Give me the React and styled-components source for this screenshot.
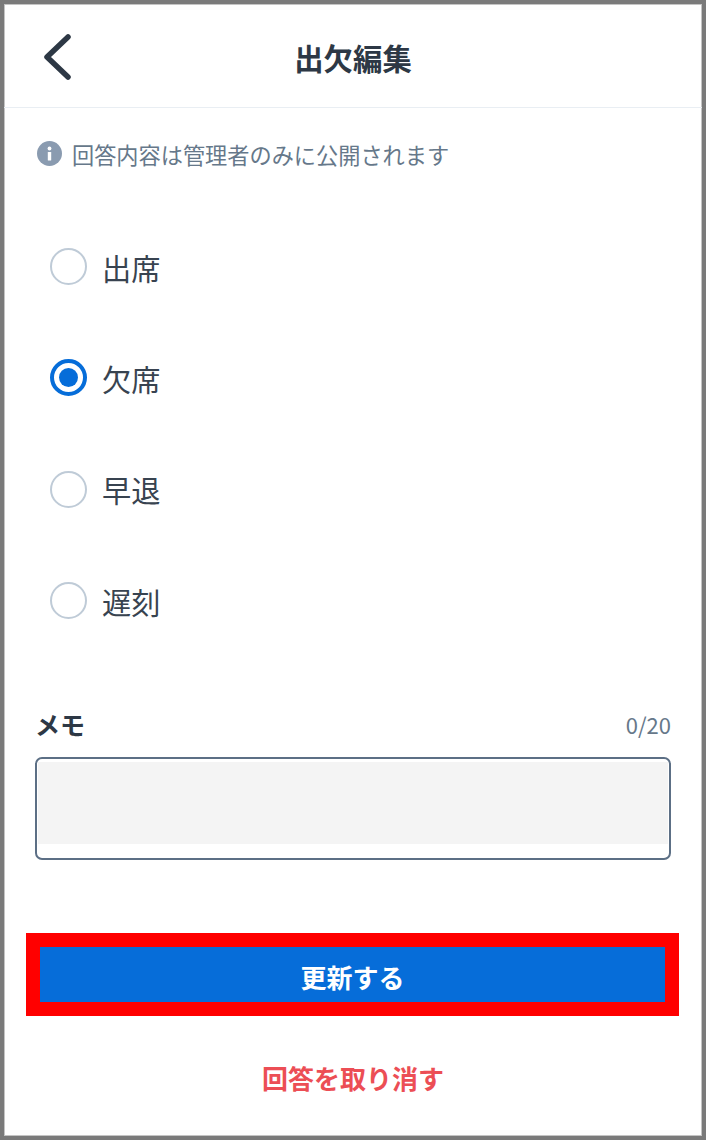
import styled, { createGlobalStyle } from "styled-components";

const GlobalStyle = createGlobalStyle`
  html, body {
    margin: 0;
    padding: 0;
    background: #fff;
  }
  * {
    box-sizing: border-box;
  }
  body {
    font-family: "Noto Sans CJK JP", "Noto Sans", sans-serif;
  }
`;

const Frame = styled.div`
  width: 706px;
  height: 1140px;
  border: 4px solid #7a7a7a;
  box-shadow: inset 0 0 0 1px #c4c4c4;
  background: #fff;
  display: flex;
  flex-direction: column;
`;

const Header = styled.header`
  height: 104px;
  flex-shrink: 0;
  display: flex;
  align-items: center;
  justify-content: center;
  position: relative;
  border-bottom: 1.5px solid #e9eef3;
`;

const BackButton = styled.div`
  position: absolute;
  left: 36px;
  top: 28px;
  width: 32px;
  height: 48px;
  svg {
    display: block;
  }
`;

const Title = styled.h1`
  margin: 0;
  font-size: 29.4px;
  line-height: 40px;
  font-weight: 700;
  color: #2d3845;
  position: relative;
  top: 1px;
`;

const Content = styled.div`
  flex: 1;
  display: flex;
  flex-direction: column;
  padding: 0 31px;
`;

const Notice = styled.div`
  display: flex;
  align-items: center;
  gap: 10px;
  margin-top: 31px;
  height: 30px;
  padding-left: 2px;
  font-size: 22.2px;
  color: #66788a;
  svg {
    flex-shrink: 0;
    position: relative;
    top: -1px;
  }
`;

const RadioList = styled.div`
  display: flex;
  flex-direction: column;
  margin-top: 42px;
  padding-left: 15px;
`;

const RadioRow = styled.label`
  height: 111.3px;
  display: flex;
  align-items: center;
  gap: 15px;
  font-size: 29.2px;
  color: #384350;
`;

const RadioCircle = styled.span`
  width: 37px;
  height: 37px;
  border-radius: 50%;
  border: ${(props) => (props.$checked ? "4px solid #066dd9" : "2px solid #bfcbd7")};
  display: flex;
  align-items: center;
  justify-content: center;
  &::after {
    content: "";
    display: ${(props) => (props.$checked ? "block" : "none")};
    width: 19px;
    height: 19px;
    border-radius: 50%;
    background: #066dd9;
  }
`;

const MemoHead = styled.div`
  display: flex;
  align-items: center;
  justify-content: space-between;
  margin-top: 48px;
  height: 40px;
`;

const MemoLabel = styled.span`
  font-size: 25px;
  font-weight: 700;
  color: #2d3845;
`;

const Counter = styled.span`
  font-size: 22px;
  color: #66788a;
`;

const MemoBox = styled.div`
  margin-top: 13px;
  height: 103px;
  border: 2px solid #5c6f85;
  border-radius: 7px;
  padding: 3px 1px 14px;
  background: #fff;
`;

const MemoFill = styled.div`
  height: 100%;
  background: #f4f4f4;
`;

const Highlight = styled.div`
  margin: 73px -8px 0 -9px;
  height: 83px;
  border: 14px solid #ff0000;
`;

const UpdateButton = styled.div`
  height: 55px;
  padding-top: 3px;
  background: #066dd9;
  color: #fff;
  font-size: 26px;
  font-weight: 700;
  display: flex;
  align-items: center;
  justify-content: center;
`;

const CancelLink = styled.div`
  margin-top: 41px;
  height: 40px;
  display: flex;
  align-items: center;
  justify-content: center;
  font-size: 26px;
  font-weight: 700;
  color: #ec4e55;
`;

const options = [
  { label: "出席", checked: false },
  { label: "欠席", checked: true },
  { label: "早退", checked: false },
  { label: "遅刻", checked: false },
];

function App() {
  return (
    <>
      <GlobalStyle />
      <Frame>
        <Header>
          <BackButton>
            <svg width="32" height="48" viewBox="0 0 32 48" fill="none">
              <path
                d="M28 5 L7 25 L28 45"
                stroke="#2d3845"
                strokeWidth="5.5"
                strokeLinecap="round"
                strokeLinejoin="round"
              />
            </svg>
          </BackButton>
          <Title>出欠編集</Title>
        </Header>
        <Content>
          <Notice>
            <svg width="25" height="25" viewBox="0 0 25 25">
              <circle cx="12.5" cy="12.5" r="12.5" fill="#8a9bb0" />
              <circle cx="12.5" cy="7.5" r="1.9" fill="#fff" />
              <rect x="10.8" y="11" width="3.4" height="8.5" rx="0.6" fill="#fff" />
            </svg>
            回答内容は管理者のみに公開されます
          </Notice>
          <RadioList>
            {options.map((option) => (
              <RadioRow key={option.label}>
                <RadioCircle $checked={option.checked} />
                {option.label}
              </RadioRow>
            ))}
          </RadioList>
          <MemoHead>
            <MemoLabel>メモ</MemoLabel>
            <Counter>0/20</Counter>
          </MemoHead>
          <MemoBox>
            <MemoFill />
          </MemoBox>
          <Highlight>
            <UpdateButton>更新する</UpdateButton>
          </Highlight>
          <CancelLink>回答を取り消す</CancelLink>
        </Content>
      </Frame>
    </>
  );
}

export default App;
